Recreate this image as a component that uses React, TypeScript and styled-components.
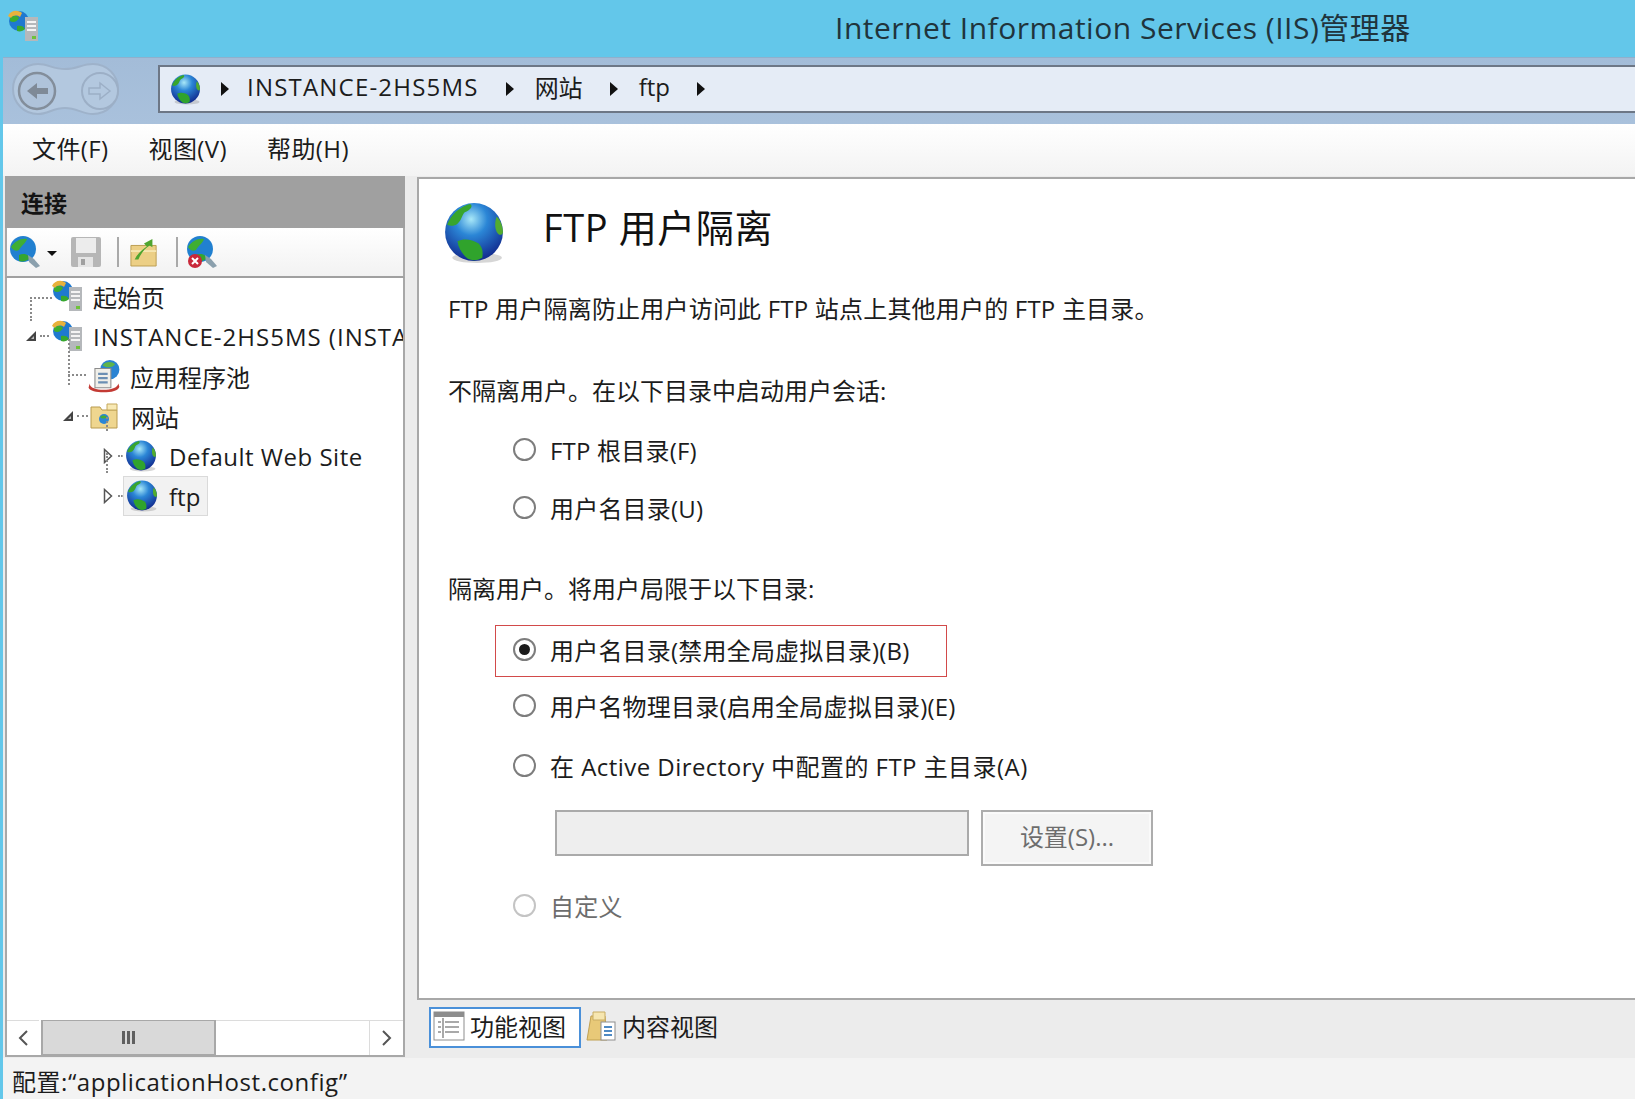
import { useId } from "react";
import styled, { createGlobalStyle } from "styled-components";

const GlobalStyle = createGlobalStyle`
  html, body {
    margin: 0;
    padding: 0;
    height: 100%;
    background: #63c7ea;
  }
  body {
    font-family: "Open Sans", "Noto Sans CJK SC", sans-serif;
    color: #1c1c1c;
    overflow: hidden;
  }
`;

const Wrapper = styled.div`
  width: 1635px;
  height: 1099px;
  display: flex;
  flex-direction: column;
  overflow: hidden;
`;
const TitleBar = styled.div`
  height: 57px;
  flex: none;
  box-sizing: border-box;
  display: flex;
  align-items: center;
  padding: 0 0 6px 7px;
  background: #63c7ea;
`;
const TitleText = styled.div`
  margin-left: 794px;
  font-size: 30px;
  letter-spacing: 0.5px;
  white-space: nowrap;
  color: #20343c;
`;
const Body = styled.div`
  flex: 1;
  min-height: 0;
  margin-left: 3px;
  display: flex;
  flex-direction: column;
  background: #f0f0f0;
`;
const Icon = styled.svg`
  flex: none;
`;
const NavBar = styled.div`
  height: 67px;
  flex: none;
  display: flex;
  align-items: center;
  padding: 0 0 4px 7px;
  box-sizing: border-box;
  background: linear-gradient(#a3bcd8, #a9c1dc);
  border-top: 1px solid #8fb0cc;
`;
const AddressBox = styled.div`
  margin-left: 36px;
  flex: 1;
  height: 48px;
  box-sizing: border-box;
  display: flex;
  align-items: center;
  padding: 0 0 0 10px;
  background: #e5ecf6;
  border: 2px solid #6d7786;
  border-right: none;
  font-size: 24px;
`;
const Crumb = styled.span<{ $tracking?: number }>`
  margin: 0 27px 5px 21px;
  white-space: nowrap;
  letter-spacing: ${(props) => props.$tracking ?? 0}px;
`;
const Arrow = styled.span<{ $first?: boolean }>`
  width: 0;
  height: 0;
  margin-left: ${(props) => (props.$first ? "20px" : "0")};
  margin-right: ${(props) => (props.$first ? "-3px" : "0")};
  border-left: 8px solid #111;
  border-top: 7px solid transparent;
  border-bottom: 7px solid transparent;
`;
const MenuBar = styled.div`
  height: 52px;
  flex: none;
  box-sizing: border-box;
  display: flex;
  align-items: center;
  gap: 40px;
  padding: 0 0 6px 29px;
  background: linear-gradient(#fff, #f3f3f3);
  font-size: 24px;
  letter-spacing: 0.4px;
`;
const MenuItem = styled.span`
  white-space: nowrap;
`;
const Panes = styled.div`
  flex: 1;
  min-height: 0;
  display: flex;
  background: #ececec;
`;
const LeftPane = styled.div`
  width: 400px;
  flex: none;
  margin-left: 2px;
  display: flex;
  flex-direction: column;
  padding-bottom: 1px;
  box-sizing: border-box;
`;
const PaneHeader = styled.div`
  height: 52px;
  flex: none;
  display: flex;
  align-items: center;
  padding-left: 16px;
  background: #a0a0a0;
  font-size: 23px;
  font-weight: 700;
  color: #141414;
`;
const ToolStrip = styled.div`
  height: 50px;
  flex: none;
  display: flex;
  align-items: center;
  padding-left: 2px;
  box-sizing: border-box;
  background: linear-gradient(#fff, #f2f2f2);
  border-left: 2px solid #a8a8a8;
  border-right: 2px solid #a8a8a8;
  border-bottom: 2px solid #a0a0a0;
`;
const ToolSep = styled.span<{ $before: number; $after: number }>`
  width: 2px;
  height: 30px;
  margin: 0 ${(props) => props.$after}px 0 ${(props) => props.$before}px;
  background: #a9a9a9;
`;
const DropCaret = styled.span`
  width: 0;
  height: 0;
  margin: 2px 13px 0 4px;
  border-top: 5px solid #111;
  border-left: 5px solid transparent;
  border-right: 5px solid transparent;
`;
const Tree = styled.div`
  flex: 1;
  min-height: 0;
  background: #fff;
  border-left: 2px solid #a8a8a8;
  border-right: 2px solid #a8a8a8;
  overflow: hidden;
  position: relative;
`;
const TreeList = styled.div`
  margin-top: -2px;
`;
const TreeRow = styled.div<{ $depth: number }>`
  height: 40px;
  display: flex;
  align-items: center;
  padding-left: ${(props) => props.$depth}px;
  white-space: nowrap;
  font-size: 24px;
`;
const Expander = styled.span`
  width: 12px;
  height: 12px;
  flex: none;
  display: flex;
  align-items: center;
`;
const RowDots = styled.span<{ $len: number }>`
  width: ${(props) => props.$len}px;
  flex: none;
  margin: 0 2px 0 3px;
  border-top: 2px dotted #8a8a8a;
`;
const TreeLabel = styled.span<{ $gap?: number; $tracking?: number }>`
  margin-left: ${(props) => props.$gap ?? 8}px;
  letter-spacing: ${(props) => props.$tracking ?? 0}px;
`;
const SelectedItem = styled.span`
  display: flex;
  align-items: center;
  height: 40px;
  width: 85px;
  box-sizing: border-box;
  margin-left: -2px;
  padding-left: 2px;
  background: #f2f2f2;
  border: 1px solid #dadada;
`;
const DotLine = styled.span<{ $left: number; $top: number; $len: number; $wide?: boolean }>`
  position: absolute;
  left: ${(props) => props.$left}px;
  top: ${(props) => props.$top}px;
  ${(props) =>
    props.$wide
      ? `width: ${props.$len}px; border-top: 2px dotted #8a8a8a;`
      : `height: ${props.$len}px; border-left: 2px dotted #8a8a8a;`}
`;
const ScrollBar = styled.div`
  height: 37px;
  flex: none;
  display: flex;
  background: #fff;
  border: 2px solid #a8a8a8;
  border-top: none;
  box-sizing: border-box;
`;
const ScrollButton = styled.div<{ $right?: boolean }>`
  width: ${(props) => (props.$right ? "34px" : "32px")};
  flex: none;
  display: flex;
  align-items: center;
  justify-content: center;
  box-sizing: border-box;
  border-top: 1px solid #dcdcdc;
  border-left: ${(props) => (props.$right ? "1px solid #dcdcdc" : "none")};
`;
const ScrollThumb = styled.div`
  width: 175px;
  flex: none;
  display: flex;
  align-items: center;
  justify-content: center;
  gap: 2px;
  margin-left: 2px;
  background: #d9d9d9;
  border: 2px solid #a8a8a8;
  border-bottom-width: 1px;
  border-top-width: 1px;
  box-sizing: border-box;
`;
const ThumbLine = styled.span`
  width: 3px;
  height: 13px;
  background: #606060;
`;
const ScrollTrack = styled.div`
  flex: 1;
  border-top: 1px solid #dcdcdc;
`;
const RightPane = styled.div`
  flex: 1;
  min-width: 0;
  margin-left: 12px;
  display: flex;
  flex-direction: column;
`;
const Content = styled.div`
  flex: 1;
  min-height: 0;
  margin-top: 1px;
  box-sizing: border-box;
  background: #fff;
  border: 2px solid #a8a8a8;
  border-right: none;
  padding: 21px 0 0 24px;
  font-size: 24px;
`;
const Heading = styled.div`
  display: flex;
  align-items: center;
  gap: 38px;
  height: 66px;
`;
const HeadingText = styled.h1`
  margin: 0 0 16px;
  font-size: 38px;
  font-weight: 400;
  letter-spacing: 0.6px;
  color: #111;
`;
const Paragraph = styled.p<{ $top: number; $tracking?: number }>`
  margin: ${(props) => props.$top}px 0 0 5px;
  height: 34px;
  line-height: 34px;
  white-space: nowrap;
  letter-spacing: ${(props) => props.$tracking ?? 0}px;
`;
const RadioRow = styled.label<{ $top: number; $muted?: boolean; $marked?: boolean }>`
  display: flex;
  align-items: center;
  gap: 14px;
  height: 52px;
  box-sizing: border-box;
  width: 452px;
  margin-top: ${(props) => props.$top}px;
  margin-left: 52px;
  padding-left: 17px;
  padding-bottom: ${(props) => (props.$marked ? "4px" : "0")};
  white-space: nowrap;
  letter-spacing: 0.2px;
  border: 1px solid ${(props) => (props.$marked ? "#d24a4a" : "transparent")};
  color: ${(props) => (props.$muted ? "#6d6d6d" : "inherit")};
`;
const RadioDot = styled.span<{ $checked?: boolean; $muted?: boolean }>`
  width: 23px;
  height: 23px;
  flex: none;
  box-sizing: border-box;
  display: flex;
  align-items: center;
  justify-content: center;
  border-radius: 50%;
  background: #fff;
  border: 2px solid ${(props) => (props.$muted ? "#c4c4c4" : "#7d7d7d")};
  &::after {
    content: "";
    width: 11px;
    height: 11px;
    border-radius: 50%;
    background: ${(props) => (props.$checked ? "#1b1b1b" : "transparent")};
  }
`;
const WideText = styled.span`
  letter-spacing: 0.45px;
`;
const FieldRow = styled.div`
  display: flex;
  align-items: flex-start;
  gap: 12px;
  margin: 19px 0 0 112px;
`;
const DisabledInput = styled.div`
  width: 414px;
  height: 46px;
  box-sizing: border-box;
  background: #eeeeee;
  border: 2px solid #aaaaaa;
`;
const SettingsButton = styled.div`
  width: 172px;
  height: 56px;
  box-sizing: border-box;
  display: flex;
  align-items: center;
  justify-content: center;
  background: #f4f4f4;
  border: 2px solid #adadad;
  outline: 2px solid #fafafa;
  outline-offset: -4px;
  color: #6d6d6d;
  padding-bottom: 5px;
`;
const TabStrip = styled.div`
  height: 58px;
  flex: none;
  box-sizing: border-box;
  display: flex;
  align-items: center;
  padding: 0 0 4px 12px;
  font-size: 24px;
  background: #ececec;
`;
const Tab = styled.div<{ $active?: boolean }>`
  height: 41px;
  box-sizing: border-box;
  display: flex;
  align-items: center;
  gap: 5px;
  padding: 0 ${(props) => (props.$active ? "13px" : "4px")} 3px 2px;
  background: ${(props) => (props.$active ? "#fff" : "transparent")};
  border: 2px solid ${(props) => (props.$active ? "#4a90d9" : "transparent")};
`;
const StatusBar = styled.div`
  height: 41px;
  flex: none;
  display: flex;
  align-items: center;
  padding: 3px 0 0 9px;
  box-sizing: border-box;
  background: #f3f3f3;
  font-size: 24px;
  letter-spacing: 0.55px;
`;

function Globe({ size }: { size: number }) {
  const id = useId();
  return (
    <Icon width={size} height={size} viewBox="0 0 60 60">
      <defs>
        <radialGradient id={id} cx="45%" cy="28%" r="70%">
          <stop offset="0%" stopColor="#a8e8f8" />
          <stop offset="40%" stopColor="#2b86d6" />
          <stop offset="100%" stopColor="#122f92" />
        </radialGradient>
      </defs>
      <ellipse cx="33" cy="54" rx="24" ry="5" fill="#8a8a8a" opacity="0.35" />
      <circle cx="30" cy="29" r="28" fill={`url(#${id})`} />
      <path d="M4 22C8 12 16 5 26 2c4 2 0 6-5 8-3 3-3 8-7 11-3 2-6 3-10 1z" fill="#38a52d" />
      <path d="M52 14c4 4 6 10 6 16-2 3-4 2-6-1-2-4-2-10 0-15z" fill="#52ac2e" />
      <path d="M14 38c6-3 14-2 20 2 4 3 5 8 4 14-5 3-10 3-14 1-5-4-9-10-10-17z" fill="#30a32c" />
    </Icon>
  );
}

function ServerGlobe({ size }: { size: number }) {
  return (
    <Icon width={size} height={size} viewBox="0 0 34 34">
      <circle cx="12" cy="12" r="10" fill="#1f79cf" />
      <path d="M3 9c3-3 7-3 9 0-2 4-6 5-9 3z" fill="#3cae2e" />
      <path d="M10 17c3-1 7 0 8 3-2 2-5 3-8 2z" fill="#38a82e" />
      <path d="M1 7c2-5 9-7 14-3l-2 4c-3-2-7-2-9 1z" fill="#e8b23c" />
      <rect x="18" y="8" width="13" height="24" fill="#b5b8bb" />
      <rect x="20" y="12" width="9" height="2" fill="#f4f4f4" />
      <rect x="20" y="16" width="9" height="2" fill="#f4f4f4" />
      <rect x="20" y="20" width="9" height="2" fill="#f4f4f4" />
      <rect x="25" y="27" width="4" height="3" fill="#6fc23a" />
    </Icon>
  );
}

function AppPoolIcon() {
  return (
    <Icon width="35" height="34" viewBox="0 0 32 32">
      <circle cx="21" cy="10" r="9" fill="#2a83d3" />
      <path d="M14 6c3-4 9-4 12-1-2 3-7 4-12 1z" fill="#5fb44a" />
      <path d="M7 9h15v18H7z" fill="#f0efe9" stroke="#8c8c8c" />
      <path d="M10 14h9M10 18h9M10 22h9" stroke="#6b8fb3" strokeWidth="2" />
      <path d="M2 23c0 8 26 8 27 0l1 3c-1 7-27 7-29 1z" fill="#c33a34" />
    </Icon>
  );
}

function SitesFolder() {
  return (
    <Icon width="28" height="26" viewBox="0 0 28 26">
      <path d="M1 4h9l2 3h15v18H1z" fill="#efd68f" stroke="#b99b4e" />
      <path d="M17 1h10v6H17z" fill="#f8e9b4" stroke="#c4a85c" />
      <circle cx="14" cy="16" r="5" fill="#2b86d6" />
      <path d="M10 14c2-2 5-2 7 0-2 2-5 2-7 0z" fill="#45ad34" />
    </Icon>
  );
}

function TreeCaret({ open }: { open?: boolean }) {
  return open ? (
    <Icon width="12" height="12" viewBox="0 0 12 12">
      <path d="M11 1v10H1z" fill="#444" />
      <path d="M9 6v3H6z" fill="#bbb" />
    </Icon>
  ) : (
    <Icon width="10" height="16" viewBox="0 0 10 16">
      <path d="M1.5 1.5l7 6.5-7 6.5z" fill="#fff" stroke="#555" strokeWidth="1.5" />
    </Icon>
  );
}

function NavButtons() {
  return (
    <Icon width="112" height="54" viewBox="0 0 110 54">
      <path
        d="M27 2c10 0 15 5 27 5s17-5 28-5c14 0 25 11 25 25S96 52 82 52c-11 0-16-6-28-6s-17 6-27 6C13 52 2 41 2 27S13 2 27 2z"
        fill="#b3c8df"
        stroke="#9eb2ca"
        strokeWidth="2"
      />
      <circle cx="26" cy="29" r="18" fill="#afc3da" stroke="#838e9b" strokeWidth="2.5" />
      <path d="M16 29l10-8v5h11v6H26v5z" fill="#7f8a97" />
      <circle cx="89" cy="29" r="18" fill="#b3c8df" stroke="#9cafc6" strokeWidth="2" />
      <path d="M99 29l-10-8v5H78v6h11v5z" fill="none" stroke="#9cafc6" strokeWidth="1.5" />
    </Icon>
  );
}

function SaveIcon() {
  return (
    <Icon width="32" height="32" viewBox="0 0 32 32">
      <rect x="1" y="1" width="30" height="30" rx="2" fill="#b6b6b6" />
      <rect x="6" y="2" width="20" height="15" fill="#ececec" />
      <rect x="8" y="21" width="15" height="10" fill="#e4e4e4" />
      <rect x="11" y="23" width="4" height="6" fill="#a0a0a0" />
    </Icon>
  );
}

function ConnectFolder() {
  return (
    <Icon width="28" height="32" viewBox="0 0 30 32">
      <path d="M1 9h27v22H1z" fill="#eccf85" stroke="#b99b4e" />
      <path d="M1 15h27" stroke="#f6e6b0" strokeWidth="2" />
      <path d="M5 24c3-6 7-10 13-14l-3-3 9-5v9l-3-2c-5 3-9 8-12 15z" fill="#4fa52f" />
    </Icon>
  );
}

function ConnectGlobe({ stop }: { stop?: boolean }) {
  return (
    <Icon width="34" height="34" viewBox="0 0 34 34">
      <circle cx="14" cy="14" r="13" fill="#2180d0" />
      <path d="M2 12c4-6 10-9 16-8-1 4-6 7-8 11-3 2-6 0-8-3z" fill="#3fae33" />
      <path d="M10 20c4-2 9-1 11 3-3 3-7 4-11 3z" fill="#35a52e" />
      <path d="M19 20l6 4 6 7-4 2-7-6z" fill="#8ba0ad" />
      {stop && <circle cx="9" cy="26" r="7" fill="#c9283a" />}
      {stop && <path d="M6 23l6 6M12 23l-6 6" stroke="#fff" strokeWidth="2" />}
    </Icon>
  );
}

function FeatureViewIcon() {
  return (
    <Icon width="32" height="30" viewBox="0 0 32 30">
      <rect x="1" y="1" width="30" height="28" fill="#fff" stroke="#8d8d8d" />
      <rect x="1" y="1" width="30" height="5" fill="#8d8d8d" />
      <path d="M5 11h3M5 16h3M5 21h3" stroke="#a9a9a9" strokeWidth="2" />
      <path d="M12 11h14M12 16h14M12 21h14M10 7v20" stroke="#8d8d8d" strokeWidth="1.5" />
    </Icon>
  );
}

function ContentViewIcon() {
  return (
    <Icon width="32" height="32" viewBox="0 0 32 32">
      <path d="M2 30L6 6h14l2 24z" fill="#e8c978" stroke="#c0a050" />
      <path d="M8 2h12v8H8z" fill="#f6e6b0" stroke="#c8ac62" />
      <rect x="16" y="12" width="14" height="18" fill="#fff" stroke="#8d8d8d" />
      <path d="M19 17h8M19 21h8M19 25h8" stroke="#4f8ac4" strokeWidth="2" />
    </Icon>
  );
}

function Chevron({ dir }: { dir: "left" | "right" }) {
  return (
    <Icon width="12" height="18" viewBox="0 0 12 18">
      <path d={dir === "left" ? "M10 2L3 9l7 7" : "M2 2l7 7-7 7"} fill="none" stroke="#555" strokeWidth="2" />
    </Icon>
  );
}

function App() {
  return (
    <Wrapper>
      <GlobalStyle />
      <TitleBar>
        <ServerGlobe size={34} />
        <TitleText>Internet Information Services (IIS)管理器</TitleText>
      </TitleBar>
      <Body>
        <NavBar>
          <NavButtons />
          <AddressBox>
            <Globe size={31} />
            <Arrow $first />
            <Crumb $tracking={1.2}>INSTANCE-2HS5MS</Crumb>
            <Arrow />
            <Crumb>网站</Crumb>
            <Arrow />
            <Crumb>ftp</Crumb>
            <Arrow />
          </AddressBox>
        </NavBar>
        <MenuBar>
          <MenuItem>文件(F)</MenuItem>
          <MenuItem>视图(V)</MenuItem>
          <MenuItem>帮助(H)</MenuItem>
        </MenuBar>
        <Panes>
          <LeftPane>
            <PaneHeader>连接</PaneHeader>
            <ToolStrip>
              <ConnectGlobe />
              <DropCaret />
              <SaveIcon />
              <ToolSep $before={15} $after={11} />
              <ConnectFolder />
              <ToolSep $before={18} $after={8} />
              <ConnectGlobe stop />
            </ToolStrip>
            <Tree>
              <DotLine $left={23} $top={19} $len={24} />
              <DotLine $left={61} $top={61} $len={46} />
              <DotLine $left={99} $top={139} $len={14} />
              <DotLine $left={99} $top={175} $len={20} />
              <DotLine $left={23} $top={19} $len={22} $wide />
              <DotLine $left={61} $top={96} $len={18} $wide />
              <TreeList>
                <TreeRow $depth={44}>
                  <ServerGlobe size={34} />
                  <TreeLabel>起始页</TreeLabel>
                </TreeRow>
                <TreeRow $depth={18}>
                  <Expander>
                    <TreeCaret open />
                  </Expander>
                  <RowDots $len={9} />
                  <ServerGlobe size={34} />
                  <TreeLabel $tracking={1}>INSTANCE-2HS5MS (INSTANCE-2HS5MS\Administrator)</TreeLabel>
                </TreeRow>
                <TreeRow $depth={80}>
                  <AppPoolIcon />
                  <TreeLabel>应用程序池</TreeLabel>
                </TreeRow>
                <TreeRow $depth={55}>
                  <Expander>
                    <TreeCaret open />
                  </Expander>
                  <RowDots $len={11} />
                  <SitesFolder />
                  <TreeLabel $gap={13}>网站</TreeLabel>
                </TreeRow>
                <TreeRow $depth={96}>
                  <Expander>
                    <TreeCaret />
                  </Expander>
                  <RowDots $len={5} />
                  <Globe size={32} />
                  <TreeLabel $gap={12} $tracking={0.5}>
                    Default Web Site
                  </TreeLabel>
                </TreeRow>
                <TreeRow $depth={96}>
                  <Expander>
                    <TreeCaret />
                  </Expander>
                  <RowDots $len={5} />
                  <SelectedItem>
                    <Globe size={32} />
                    <TreeLabel $gap={11}>ftp</TreeLabel>
                  </SelectedItem>
                </TreeRow>
              </TreeList>
            </Tree>
            <ScrollBar>
              <ScrollButton>
                <Chevron dir="left" />
              </ScrollButton>
              <ScrollThumb>
                <ThumbLine />
                <ThumbLine />
                <ThumbLine />
              </ScrollThumb>
              <ScrollTrack />
              <ScrollButton $right>
                <Chevron dir="right" />
              </ScrollButton>
            </ScrollBar>
          </LeftPane>
          <RightPane>
            <Content>
              <Heading>
                <Globe size={62} />
                <HeadingText>FTP 用户隔离</HeadingText>
              </Heading>
              <Paragraph $top={26} $tracking={0.2}>
                FTP 用户隔离防止用户访问此 FTP 站点上其他用户的 FTP 主目录。
              </Paragraph>
              <Paragraph $top={48}>不隔离用户。在以下目录中启动用户会话:</Paragraph>
              <RadioRow $top={15}>
                <RadioDot />
                FTP 根目录(F)
              </RadioRow>
              <RadioRow $top={6}>
                <RadioDot />
                用户名目录(U)
              </RadioRow>
              <Paragraph $top={39}>隔离用户。将用户局限于以下目录:</Paragraph>
              <RadioRow $top={19} $marked>
                <RadioDot $checked />
                用户名目录(禁用全局虚拟目录)(B)
              </RadioRow>
              <RadioRow $top={2}>
                <RadioDot />
                用户名物理目录(启用全局虚拟目录)(E)
              </RadioRow>
              <RadioRow $top={8}>
                <RadioDot />
                <WideText>在 Active Directory 中配置的 FTP 主目录(A)</WideText>
              </RadioRow>
              <FieldRow>
                <DisabledInput />
                <SettingsButton>设置(S)...</SettingsButton>
              </FieldRow>
              <RadioRow $top={13} $muted>
                <RadioDot $muted />
                自定义
              </RadioRow>
            </Content>
            <TabStrip>
              <Tab $active>
                <FeatureViewIcon />
                功能视图
              </Tab>
              <Tab>
                <ContentViewIcon />
                内容视图
              </Tab>
            </TabStrip>
          </RightPane>
        </Panes>
        <StatusBar>配置:“applicationHost.config”</StatusBar>
      </Body>
    </Wrapper>
  );
}

export default App;
